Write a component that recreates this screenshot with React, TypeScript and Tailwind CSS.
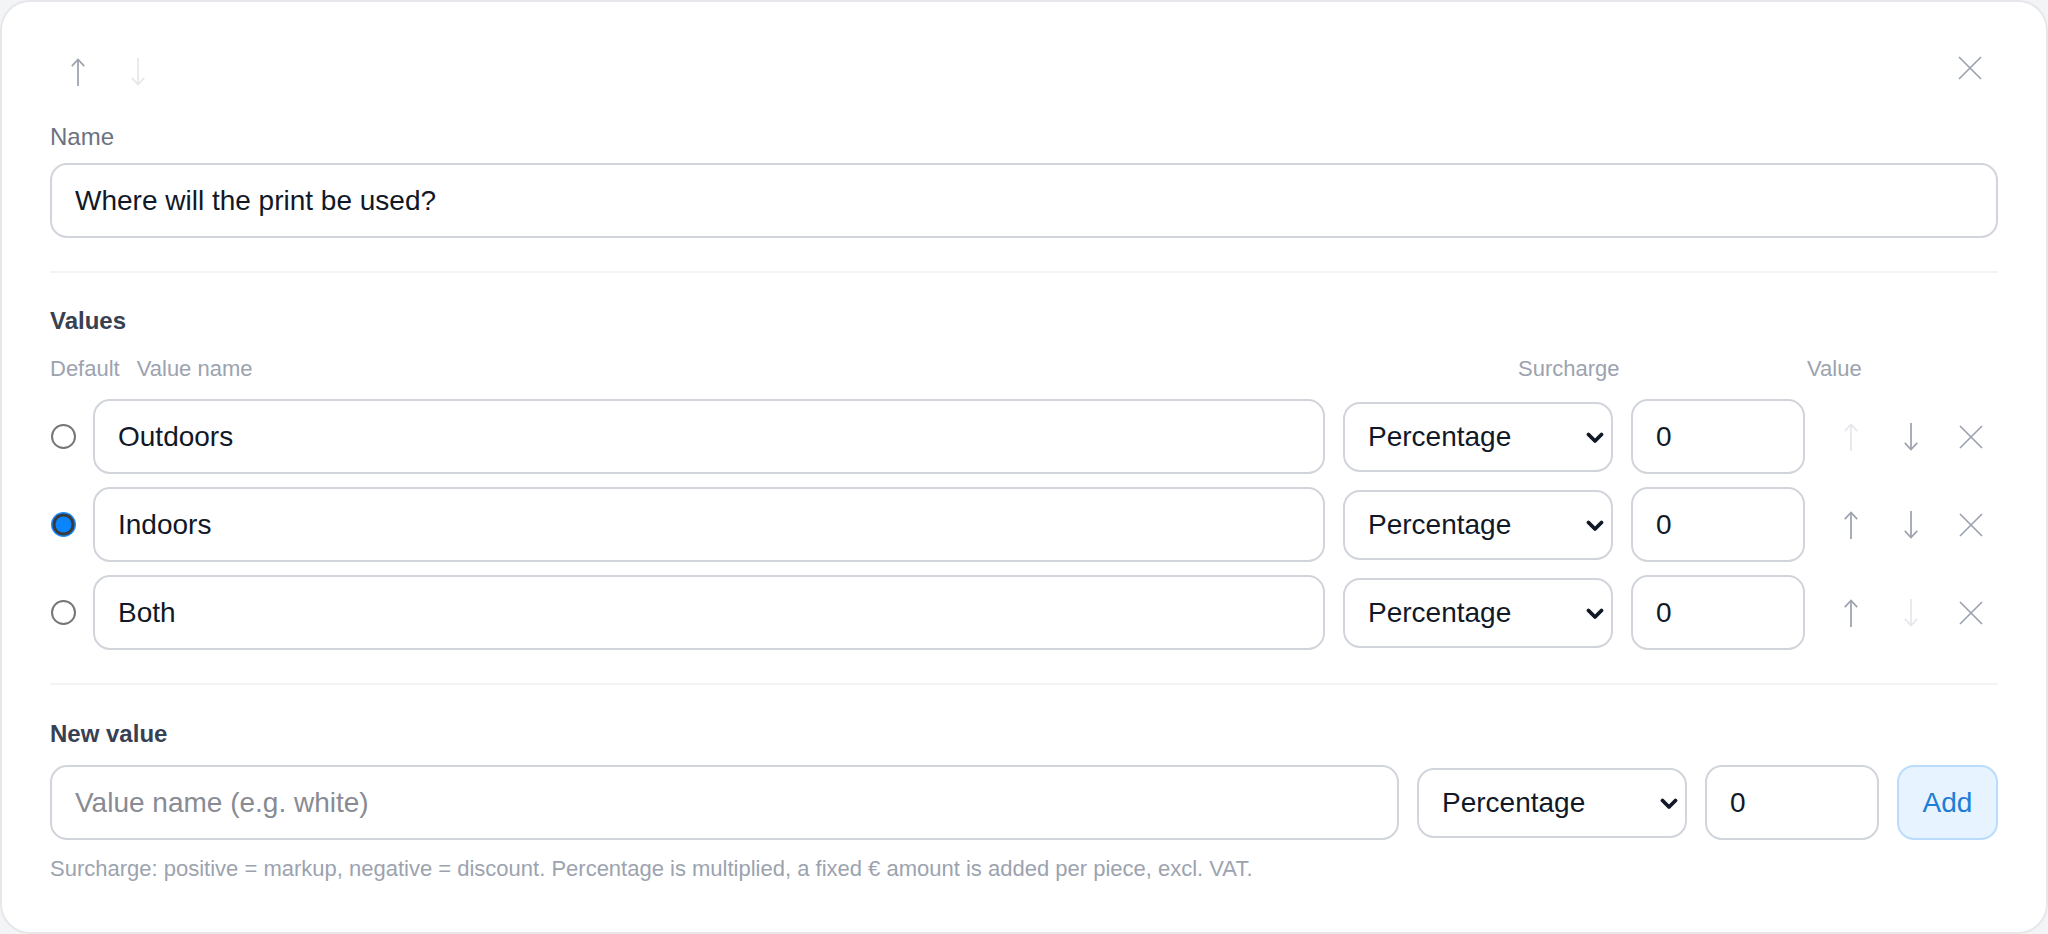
import { useState } from "react";

type ValueRow = { id: number; name: string; kind: string; amount: string };

const initialRows: ValueRow[] = [
  { id: 1, name: "Outdoors", kind: "percentage", amount: "0" },
  { id: 2, name: "Indoors", kind: "percentage", amount: "0" },
  { id: 3, name: "Both", kind: "percentage", amount: "0" },
];

const fieldClass =
  "h-[75px] rounded-[17px] border-2 border-[#d1d5db] bg-white pl-[23px] pr-4 text-[28px] text-[#111827] outline-none placeholder:text-[#888b93]";

function UpArrow({ className }: { className?: string }) {
  return (
    <svg width="16" height="28" viewBox="0 0 16 28" fill="none" stroke="currentColor" strokeWidth="1.75" className={className}>
      <path d="M8 1.5V28" />
      <path d="M1.8 8.2 8 1.5l6.2 6.7" />
    </svg>
  );
}

function DownArrow({ className }: { className?: string }) {
  return (
    <svg width="16" height="28" viewBox="0 0 16 28" fill="none" stroke="currentColor" strokeWidth="1.75" className={className}>
      <path d="M8 0v26.5" />
      <path d="M1.8 19.8 8 26.5l6.2-6.7" />
    </svg>
  );
}

function Cross({ className }: { className?: string }) {
  return (
    <svg width="24" height="24" viewBox="0 0 24 24" fill="none" stroke="currentColor" strokeWidth="1.75" className={className}>
      <path d="M1 1l22 22M23 1 1 23" />
    </svg>
  );
}

function SurchargeSelect({ value, onChange }: { value: string; onChange: (v: string) => void }) {
  return (
    <div className="relative w-[270px] shrink-0">
      <select
        value={value}
        onChange={(e) => onChange(e.target.value)}
        className="h-[70px] w-full appearance-none rounded-[17px] border-2 border-[#d1d5db] bg-white pl-[23px] pr-12 text-[28px] text-[#111827] outline-none"
      >
        <option value="percentage">Percentage</option>
        <option value="fixed">Fixed €</option>
      </select>
      <svg width="18" height="12" viewBox="0 0 18 12" fill="none" stroke="#111827" strokeWidth="3.75" strokeLinecap="round" strokeLinejoin="round" className="pointer-events-none absolute right-[9px] top-[30px]">
        <path d="M2.5 2.5 9 9l6.5-6.5" />
      </svg>
    </div>
  );
}

function Radio({ checked, onClick }: { checked: boolean; onClick: () => void }) {
  return (
    <button onClick={onClick} className="flex w-[26px] shrink-0 items-center justify-center">
      {checked ? (
        <svg width="25" height="25" viewBox="0 0 25 25">
          <circle cx="12.5" cy="12.5" r="12.5" fill="#1a8cff" />
          <circle cx="12.5" cy="12.5" r="11" fill="#3b3b3b" />
          <circle cx="12.5" cy="12.5" r="8" fill="#0a84ff" />
        </svg>
      ) : (
        <span className="block h-[25px] w-[25px] rounded-full border-2 border-[#767676] bg-white" />
      )}
    </button>
  );
}

export default function App() {
  const [name, setName] = useState("Where will the print be used?");
  const [rows, setRows] = useState(initialRows);
  const [defaultId, setDefaultId] = useState(2);
  const [draftName, setDraftName] = useState("");
  const [draftKind, setDraftKind] = useState("percentage");
  const [draftAmount, setDraftAmount] = useState("0");

  const updateRow = (id: number, field: keyof ValueRow, value: string) => {
    setRows(rows.map((r) => (r.id === id ? { ...r, [field]: value } : r)));
  };

  const moveRow = (index: number, dir: number) => {
    const next = [...rows];
    const [item] = next.splice(index, 1);
    next.splice(index + dir, 0, item);
    setRows(next);
  };

  const addRow = () => {
    if (!draftName.trim()) return;
    setRows([...rows, { id: Date.now(), name: draftName, kind: draftKind, amount: draftAmount }]);
    setDraftName("");
    setDraftAmount("0");
  };

  return (
    <div className="h-[934px] bg-[#f3f4f6] font-['Liberation_Sans',Arial,sans-serif]">
      <div className="flex h-full flex-col rounded-[30px] border-2 border-[#e5e7eb] bg-white px-[48px] pt-[48px]">
        {/* Header: reorder + close */}
        <div className="flex h-[44px] items-center justify-between">
          <div className="flex gap-1">
            <button className="flex h-[44px] w-[56px] items-center justify-center text-[#9ca3af]">
              <UpArrow />
            </button>
            <button className="flex h-[44px] w-[56px] items-center justify-center text-[#e5e7eb]">
              <DownArrow />
            </button>
          </div>
          <button className="-mt-[8px] flex h-[44px] w-[56px] items-center justify-center text-[#9ca3af]">
            <Cross />
          </button>
        </div>

        <label className="mt-[27px] mb-[10px] text-[24px] leading-[32px] text-[#6b7280]">Name</label>
        <input value={name} onChange={(e) => setName(e.target.value)} className={`${fieldClass} h-[74px] w-full`} />

        <div className="mt-[33px] h-[2px] bg-[#f3f4f6]" />

        {/* Values */}
        <h3 className="mt-[32px] text-[24px] font-bold leading-[32px] text-[#374151]">Values</h3>
        <div className="mt-[17px] flex text-[22px] leading-[30px] text-[#9ca3af]">
          <span>Default</span>
          <span className="ml-[17px] flex-1">Value name</span>
          <span className="w-[289px]">Surcharge</span>
          <span className="w-[191px]">Value</span>
        </div>

        <div className="mt-[15px] flex flex-col gap-[13px]">
          {rows.map((row, i) => (
            <div key={row.id} className="flex items-center gap-[17px]">
              <Radio checked={defaultId === row.id} onClick={() => setDefaultId(row.id)} />
              <div className="flex flex-1 items-center gap-[18px]">
                <input value={row.name} onChange={(e) => updateRow(row.id, "name", e.target.value)} className={`${fieldClass} min-w-0 flex-1`} />
                <SurchargeSelect value={row.kind} onChange={(v) => updateRow(row.id, "kind", v)} />
                <input value={row.amount} onChange={(e) => updateRow(row.id, "amount", e.target.value)} className={`${fieldClass} w-[174px] shrink-0`} />
                <div className="flex w-[175px] shrink-0 items-center justify-between">
                  <button
                    disabled={i === 0}
                    onClick={() => moveRow(i, -1)}
                    className={`flex h-[44px] w-[55px] items-center justify-center ${i === 0 ? "text-[#e5e7eb]" : "text-[#9ca3af]"}`}
                  >
                    <UpArrow />
                  </button>
                  <button
                    disabled={i === rows.length - 1}
                    onClick={() => moveRow(i, 1)}
                    className={`flex h-[44px] w-[55px] items-center justify-center ${i === rows.length - 1 ? "text-[#e5e7eb]" : "text-[#9ca3af]"}`}
                  >
                    <DownArrow />
                  </button>
                  <button
                    onClick={() => setRows(rows.filter((r) => r.id !== row.id))}
                    className="flex h-[44px] w-[55px] items-center justify-center text-[#9ca3af]"
                  >
                    <Cross />
                  </button>
                </div>
              </div>
            </div>
          ))}
        </div>

        <div className="mt-[33px] h-[2px] bg-[#f3f4f6]" />

        {/* New value */}
        <h3 className="mt-[33px] text-[24px] font-bold leading-[32px] text-[#374151]">New value</h3>
        <div className="mt-[15px] flex items-center gap-[18px]">
          <input
            value={draftName}
            onChange={(e) => setDraftName(e.target.value)}
            placeholder="Value name (e.g. white)"
            className={`${fieldClass} min-w-0 flex-1`}
          />
          <SurchargeSelect value={draftKind} onChange={setDraftKind} />
          <input value={draftAmount} onChange={(e) => setDraftAmount(e.target.value)} className={`${fieldClass} w-[174px] shrink-0`} />
          <button
            onClick={addRow}
            className="h-[75px] w-[101px] shrink-0 rounded-[17px] border-2 border-[#bcdcfd] bg-[#e7f3ff] text-[28px] text-[#1c7ed6]"
          >
            Add
          </button>
        </div>
        <p className="mt-[14px] text-[22px] leading-[30px] text-[#9ca3af]">
          Surcharge: positive = markup, negative = discount. Percentage is multiplied, a fixed € amount is added per piece, excl. VAT.
        </p>
      </div>
    </div>
  );
}
